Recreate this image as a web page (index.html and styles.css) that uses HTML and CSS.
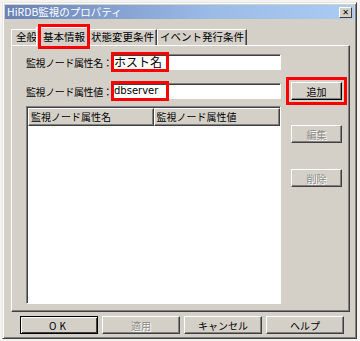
FILE: index.html
```html
<!DOCTYPE html>
<html lang="ja">

<head>
    <meta charset="UTF-8">
    <title>HiRDB監視のプロパティ</title>
    <link rel="stylesheet" href="styles.css">
</head>

<body>
    <div class="dialog">
        <div class="titlebar">
            <span class="title">HiRDB監視のプロパティ</span>
            <span class="close">✕</span>
        </div>

        <div class="tabs">
            <div class="tab first">全般</div>
            <div class="tab active"><span class="mark">基本情報</span></div>
            <div class="tab">状態変更条件</div>
            <div class="tab">イベント発行条件</div>
        </div>

        <div class="panel">
            <div class="row">
                <span class="label">監視ノード属性名：</span>
                <div class="field"><span class="mark">ホスト名</span></div>
            </div>
            <div class="row second">
                <span class="label">監視ノード属性値：</span>
                <div class="field"><span class="mark latin">dbserver</span></div>
                <button class="btn side mark-btn">追加</button>
            </div>

            <div class="list_area">
                <div class="list">
                    <div class="list_head">
                        <div class="col">監視ノード属性名</div>
                        <div class="col">監視ノード属性値</div>
                    </div>
                </div>
                <div class="side_buttons">
                    <button class="btn side disabled">編集</button>
                    <button class="btn side disabled">削除</button>
                </div>
            </div>
        </div>

        <div class="footer">
            <button class="btn wide default latin">OK</button>
            <button class="btn wide disabled">適用</button>
            <button class="btn wide">キャンセル</button>
            <button class="btn wide">ヘルプ</button>
        </div>
    </div>
</body>

</html>
```

FILE: styles.css
```css
* {
    margin: 0;
    padding: 0;
    box-sizing: border-box;
}

body {
    background: #f4f3f0;
    font-family: "Noto Sans CJK JP", "DejaVu Sans", sans-serif;
    font-size: 10px;
    color: #000;
}

.dialog {
    margin: 2px;
    width: 355px;
    height: 337px;
    background: #d4d0c8;
    border: 1px solid;
    border-color: #e8e6e0 #404040 #404040 #e8e6e0;
    box-shadow: inset 1px 1px #fff, inset -1px -1px #808080;
    padding: 2px;
    display: flex;
    flex-direction: column;
}

/* title */
.titlebar {
    height: 14px;
    background: linear-gradient(to right, #6a82b6, #9cbce8 60%, #aacbf2);
    display: flex;
    align-items: center;
    justify-content: space-between;
    padding: 0 2px 0 2px;
}

.title {
    color: #fff;
    font-size: 10.5px;
    line-height: 14px;
}

.close {
    width: 13px;
    height: 11px;
    background: #d4d0c8;
    border: 1px solid;
    border-color: #fff #404040 #404040 #fff;
    font-size: 8px;
    font-weight: bold;
    line-height: 9px;
    text-align: center;
    font-family: "DejaVu Sans", sans-serif;
}

/* tabs */
.tabs {
    display: flex;
    align-items: flex-end;
    margin-top: 6px;
    padding-left: 6px;
    height: 20px;
    position: relative;
    z-index: 1;
    font-size: 10.5px;
}

.tab {
    height: 16px;
    line-height: 14px;
    padding: 0 2px;
    border: 1px solid;
    border-bottom: none;
    border-color: #fff #404040 transparent #fff;
    box-shadow: inset -1px 0 #808080;
    white-space: nowrap;
}

.tab.first {
    width: 34px;
    overflow: hidden;
    padding-left: 4px;
}

.tab.active {
    height: 19px;
    background: #d4d0c8;
    margin: 0 -2px -1px -9px;
    padding: 2px 4px 0 6px;
    position: relative;
}

.tab.active .mark {
    outline: 3px solid #f00;
    outline-offset: 2px;
}

.mark {
    outline: 3px solid #f00;
}

/* panel */
.panel {
    margin: 0 4px 0 6px;
    height: 267px;
    border: 1px solid;
    border-color: #fff #404040 #404040 #fff;
    box-shadow: inset -1px -1px #808080;
    padding: 8px 0 0 14px;
}

.row {
    display: flex;
    align-items: center;
    height: 16px;
}

.row.second {
    margin-top: 13px;
}

.label {
    width: 86px;
    letter-spacing: -0.4px;
    white-space: nowrap;
}

.field {
    width: 169px;
    height: 16px;
    background: #fff;
    border: 1px solid;
    border-color: #808080 #fff #fff #808080;
    box-shadow: inset 1px 1px #404040;
    display: flex;
    align-items: stretch;
    padding-left: 1px;
}

.field .mark {
    display: block;
    width: 52px;
    line-height: 14px;
    font-size: 12px;
}

.field .latin {
    font-size: 10px;
}

.latin {
    font-family: "DejaVu Sans", "Noto Sans CJK JP", sans-serif;
}

/* buttons */
.btn {
    font-family: inherit;
    font-size: 10px;
    background: #d4d0c8;
    border: 1px solid;
    border-color: #fff #404040 #404040 #fff;
    box-shadow: inset -1px -1px #808080;
    color: #000;
    height: 18px;
}

.btn.side {
    width: 51px;
    margin-left: 10px;
}

.btn.mark-btn {
    outline: 3px solid #f00;
    outline-offset: 2px;
    border-color: #fff #000 #000 #fff;
}

.btn.disabled {
    color: #8c8a86;
    text-shadow: 1px 1px #fff;
}

/* list */
.list_area {
    display: flex;
    margin-top: 7px;
}

.list {
    width: 255px;
    height: 198px;
    background: #fff;
    border: 1px solid;
    border-color: #808080 #fff #fff #808080;
    box-shadow: inset 1px 1px #404040;
    padding: 1px 0 0 1px;
}

.list_head {
    display: flex;
}

.col {
    width: 126px;
    height: 18px;
    line-height: 16px;
    padding-left: 2px;
    background: #d4d0c8;
    border: 1px solid;
    border-color: #fff #404040 #404040 #fff;
    box-shadow: inset -1px -1px #808080;
}

.col + .col {
    width: 127px;
}

.side_buttons {
    display: flex;
    flex-direction: column;
    gap: 26px;
    padding-top: 19px;
}

/* footer */
.footer {
    display: flex;
    gap: 4px;
    padding: 4px 0 0 15px;
}

.btn.wide {
    width: 78px;
    height: 18px;
}

.btn.default {
    border-color: #000;
    box-shadow: inset 1px 1px #fff, inset -1px -1px #404040;
    letter-spacing: 3px;
}
```
